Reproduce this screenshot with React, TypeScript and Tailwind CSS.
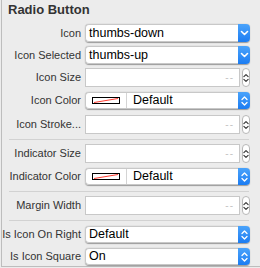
import React from "react";

const font = { fontFamily: '"Liberation Sans", Arial, sans-serif' };

function Label({ text }: { text: string }) {
  return (
    <span className="w-[79px] shrink-0 text-right text-[11px] text-[#333] whitespace-nowrap">
      {text}
    </span>
  );
}

function ChevronDown() {
  return (
    <svg width="9" height="6" viewBox="0 0 9 6">
      <path d="M1.5 1.5 L4.5 4.5 L7.5 1.5" fill="none" stroke="white" strokeWidth="1.6" strokeLinecap="round" strokeLinejoin="round" />
    </svg>
  );
}

function ChevronUpDown({ color = "white" }: { color?: string }) {
  return (
    <svg width="7" height="12" viewBox="0 0 7 12">
      <path d="M1 4.5 L3.5 2 L6 4.5" fill="none" stroke={color} strokeWidth="1.3" strokeLinecap="round" strokeLinejoin="round" />
      <path d="M1 7.5 L3.5 10 L6 7.5" fill="none" stroke={color} strokeWidth="1.3" strokeLinecap="round" strokeLinejoin="round" />
    </svg>
  );
}

function BlueButton({ updown }: { updown?: boolean }) {
  return (
    <div className="w-[12px] shrink-0 rounded-r-[4px] bg-gradient-to-b from-[#4aa3fb] to-[#1a7cf2] flex items-center justify-center">
      {updown ? <ChevronUpDown /> : <ChevronDown />}
    </div>
  );
}

function Popup({ value, updown }: { value: string; updown?: boolean }) {
  return (
    <div className={`w-[165px] flex rounded-[4px] shadow-[0_0.5px_1px_rgba(0,0,0,0.35)] ${updown ? "h-[17px]" : "h-[18px]"}`}>
      <div className="flex-1 bg-white border border-r-0 border-[#c8c8c8] rounded-l-[4px] flex items-center pl-[3px] text-[12.5px] text-black">
        {value}
      </div>
      <BlueButton updown={updown} />
    </div>
  );
}

function ColorPopup() {
  return (
    <div className="w-[165px] h-[17px] flex rounded-[4px] shadow-[0_0.5px_1px_rgba(0,0,0,0.35)]">
      <div className="flex-1 bg-white border border-r-0 border-[#c8c8c8] rounded-l-[4px] flex items-center">
        <div className="w-[41px] h-full border-r border-[#d4d4d4] flex items-center justify-center">
          <svg width="28" height="7" viewBox="0 0 28 7">
            <rect x="0.5" y="0.5" width="27" height="6" fill="white" stroke="black" strokeWidth="1" />
            <line x1="2" y1="5.5" x2="26" y2="1.5" stroke="#ff3b30" strokeWidth="1" />
          </svg>
        </div>
        <span className="pl-[6px] text-[12.5px] text-black">Default</span>
      </div>
      <BlueButton updown />
    </div>
  );
}

function NumberField() {
  return (
    <div className="w-[165px] h-[19px] flex items-center gap-[2px]">
      <div className="w-[156px] h-full bg-white border border-[#c8c8c8] flex items-center justify-end pr-[5px] text-[10px] text-[#c4c4c4] tracking-[1px]">
        --
      </div>
      <div className="w-[8px] h-[19px] rounded-full border border-[#b8b8b8] bg-white flex items-center justify-center">
        <ChevronUpDown color="#333" />
      </div>
    </div>
  );
}

function Row({ label, children, className }: { label: string; children: React.ReactNode; className?: string }) {
  return (
    <div className={`flex items-center gap-[4px] ${className ?? ""}`}>
      <Label text={label} />
      {children}
    </div>
  );
}

function Separator({ className }: { className?: string }) {
  return <div className={`ml-[7px] w-[240px] h-px bg-[#d2d2d2] ${className ?? ""}`} />;
}

export default function App() {
  return (
    <div className="w-[260px] h-[268px] bg-[#ececec] overflow-hidden" style={font}>
      <div className="ml-px h-[267px] border-l border-b border-[#bdbdbd]">
        <div className="h-[20px] flex items-center pl-[6px] text-[13px] font-bold text-[#333]">
          Radio Button
        </div>
        <Row label="Icon" className="mt-[4px]">
          <Popup value="thumbs-down" />
        </Row>
        <Row label="Icon Selected" className="mt-[4px]">
          <Popup value="thumbs-up" />
        </Row>
        <Row label="Icon Size" className="mt-[4px]">
          <NumberField />
        </Row>
        <Row label="Icon Color" className="mt-[5px]">
          <ColorPopup />
        </Row>
        <Row label="Icon Stroke..." className="mt-[6px]">
          <NumberField />
        </Row>
        <Separator className="mt-[5px]" />
        <Row label="Indicator Size" className="mt-[4px]">
          <NumberField />
        </Row>
        <Row label="Indicator Color" className="mt-[5px]">
          <ColorPopup />
        </Row>
        <Separator className="mt-[6px]" />
        <Row label="Margin Width" className="mt-[4px]">
          <NumberField />
        </Row>
        <Separator className="mt-[5px]" />
        <Row label="Is Icon On Right" className="mt-[5px]">
          <Popup value="Default" updown />
        </Row>
        <Row label="Is Icon Square" className="mt-[5px]">
          <Popup value="On" updown />
        </Row>
      </div>
    </div>
  );
}
